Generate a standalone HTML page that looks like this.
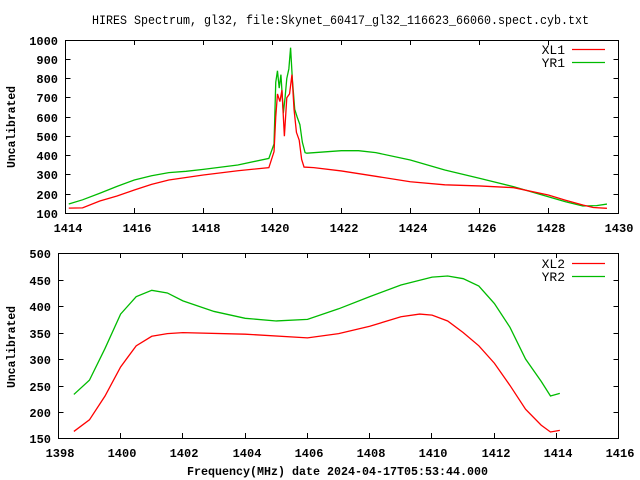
<!DOCTYPE html>
<html><head><style>
html,body{margin:0;padding:0;background:#fff;}
svg{display:block;}
.t{font-family:"Liberation Mono",monospace;font-weight:bold;font-size:12px;fill:#000;}
.r{font-family:"Liberation Mono",monospace;font-size:13px;fill:#000;}
</style></head><body>
<svg width="640" height="480" xmlns="http://www.w3.org/2000/svg">
<text class="r" x="92" y="24" textLength="497" lengthAdjust="spacingAndGlyphs">HIRES Spectrum, gl32, file:Skynet_60417_gl32_116623_66060.spect.cyb.txt</text>

<!-- TOP PLOT -->
<g stroke="#000" stroke-width="1" fill="none">
<rect x="65.5" y="40.5" width="553" height="173"/>
<path d="M65.5 78.5h5M618.5 78.5h-5M65.5 97.5h5M618.5 97.5h-5M65.5 117.5h5M618.5 117.5h-5M65.5 136.5h5M618.5 136.5h-5M65.5 155.5h5M618.5 155.5h-5M65.5 174.5h5M618.5 174.5h-5M65.5 194.5h5M618.5 194.5h-5M65.5 59.5h5M618.5 59.5h-5
M134.5 213v-5M134.5 40v5M203.5 213v-5M203.5 40v5M272.5 213v-5M272.5 40v5M341.5 213v-5M341.5 40v5M410.5 213v-5M410.5 40v5M479.5 213v-5M479.5 40v5M548.5 213v-5M548.5 40v5"/>
</g>
<g class="t" text-anchor="end">
<text x="58" y="45">1000</text><text x="58" y="64">900</text><text x="58" y="83">800</text><text x="58" y="102">700</text><text x="58" y="122">600</text><text x="58" y="141">500</text><text x="58" y="160">400</text><text x="58" y="179">300</text><text x="58" y="199">200</text><text x="58" y="218">100</text>
</g>
<g class="t" text-anchor="middle">
<text x="68" y="232">1414</text><text x="137" y="232">1416</text><text x="206" y="232">1418</text><text x="275" y="232">1420</text><text x="344" y="232">1422</text><text x="413" y="232">1424</text><text x="482" y="232">1426</text><text x="551" y="232">1428</text><text x="619" y="232">1430</text>
</g>
<text class="t" transform="translate(15,127) rotate(-90)" text-anchor="middle" textLength="82" lengthAdjust="spacingAndGlyphs">Uncalibrated</text>
<text class="r" x="565" y="54" text-anchor="end">XL1</text>
<text class="r" x="565" y="67" text-anchor="end">YR1</text>
<path d="M572 49.5h33" stroke="#f00" stroke-width="1.3"/>
<path d="M572 62.5h33" stroke="#0b0" stroke-width="1.3"/>

<g transform="matrix(34.5,0,0,-0.1926,65.3,232.56)" fill="none" stroke-width="1.3">
<polyline vector-effect="non-scaling-stroke" stroke="#0b0" points="0.1,148 0.5,170 1,204 1.5,240 2,273 2.5,295 3,311 3.5,318 4,328 5,351 5.9,385 6.05,460 6.1,780 6.15,840 6.2,750 6.25,820 6.32,620 6.37,700 6.42,800 6.48,850 6.53,960 6.58,800 6.65,640 6.72,600 6.8,560 6.87,470 6.95,415 7,412 8,425 8.5,425 9,415 10,377 11,325 12,282 13,238 14,186 14.5,160 15,138 15.4,140 15.7,148"/>
<polyline vector-effect="non-scaling-stroke" stroke="#f00" points="0.1,127 0.5,128 1,164 1.5,190 2,221 2.5,250 3,273 4,299 5,321 5.9,337 6.05,420 6.1,600 6.15,720 6.22,680 6.28,740 6.35,500 6.42,700 6.5,720 6.57,820 6.63,640 6.7,520 6.78,480 6.85,380 6.92,340 7.2,337 8,320 9,292 10,264 11,248 12,242 13,233 14,195 14.5,168 15,143 15.3,130 15.7,126"/>
</g>

<!-- BOTTOM PLOT -->
<g stroke="#000" stroke-width="1" fill="none">
<rect x="58.5" y="253.5" width="560" height="185"/>
<path d="M58.5 280.5h5M618.5 280.5h-5M58.5 306.5h5M618.5 306.5h-5M58.5 333.5h5M618.5 333.5h-5M58.5 359.5h5M618.5 359.5h-5M58.5 386.5h5M618.5 386.5h-5M58.5 412.5h5M618.5 412.5h-5
M120.5 438v-5M120.5 253v5M182.5 438v-5M182.5 253v5M245.5 438v-5M245.5 253v5M307.5 438v-5M307.5 253v5M369.5 438v-5M369.5 253v5M431.5 438v-5M431.5 253v5M494.5 438v-5M494.5 253v5M556.5 438v-5M556.5 253v5"/>
</g>
<g class="t" text-anchor="end">
<text x="51" y="258">500</text><text x="51" y="285">450</text><text x="51" y="311">400</text><text x="51" y="338">350</text><text x="51" y="364">300</text><text x="51" y="391">250</text><text x="51" y="417">200</text><text x="51" y="443">150</text>
</g>
<g class="t" text-anchor="middle">
<text x="60" y="457">1398</text><text x="122" y="457">1400</text><text x="184" y="457">1402</text><text x="247" y="457">1404</text><text x="309" y="457">1406</text><text x="371" y="457">1408</text><text x="433" y="457">1410</text><text x="496" y="457">1412</text><text x="558" y="457">1414</text><text x="620" y="457">1416</text>
</g>
<text class="t" transform="translate(15,347) rotate(-90)" text-anchor="middle" textLength="82" lengthAdjust="spacingAndGlyphs">Uncalibrated</text>
<text class="t" x="187" y="475" textLength="301" lengthAdjust="spacingAndGlyphs">Frequency(MHz) date 2024-04-17T05:53:44.000</text>
<text class="r" x="565" y="268" text-anchor="end">XL2</text>
<text class="r" x="565" y="281" text-anchor="end">YR2</text>
<path d="M572 263.5h33" stroke="#f00" stroke-width="1.3"/>
<path d="M572 276.5h33" stroke="#0b0" stroke-width="1.3"/>

<g transform="matrix(31.15,0,0,-0.5286,58.3,517.6)" fill="none" stroke-width="1.3">
<polyline vector-effect="non-scaling-stroke" stroke="#0b0" points="0.5,233 1,260 1.5,320 2,385 2.5,418 3,430 3.5,425 4,410 5,390 6,377 7,372 8,375 9,395 10,418 11,440 12,455 12.5,457 13,452 13.5,438 14,405 14.5,360 15,300 15.5,258 15.8,230 16.1,235"/>
<polyline vector-effect="non-scaling-stroke" stroke="#f00" points="0.5,163 1,185 1.5,230 2,285 2.5,325 3,343 3.5,348 4,350 6,347 8,340 9,348 10,362 11,380 11.6,385 12,383 12.5,372 13,350 13.5,325 14,292 14.5,250 15,205 15.5,175 15.8,162 16.1,165"/>
</g>
</svg>
</body></html>
